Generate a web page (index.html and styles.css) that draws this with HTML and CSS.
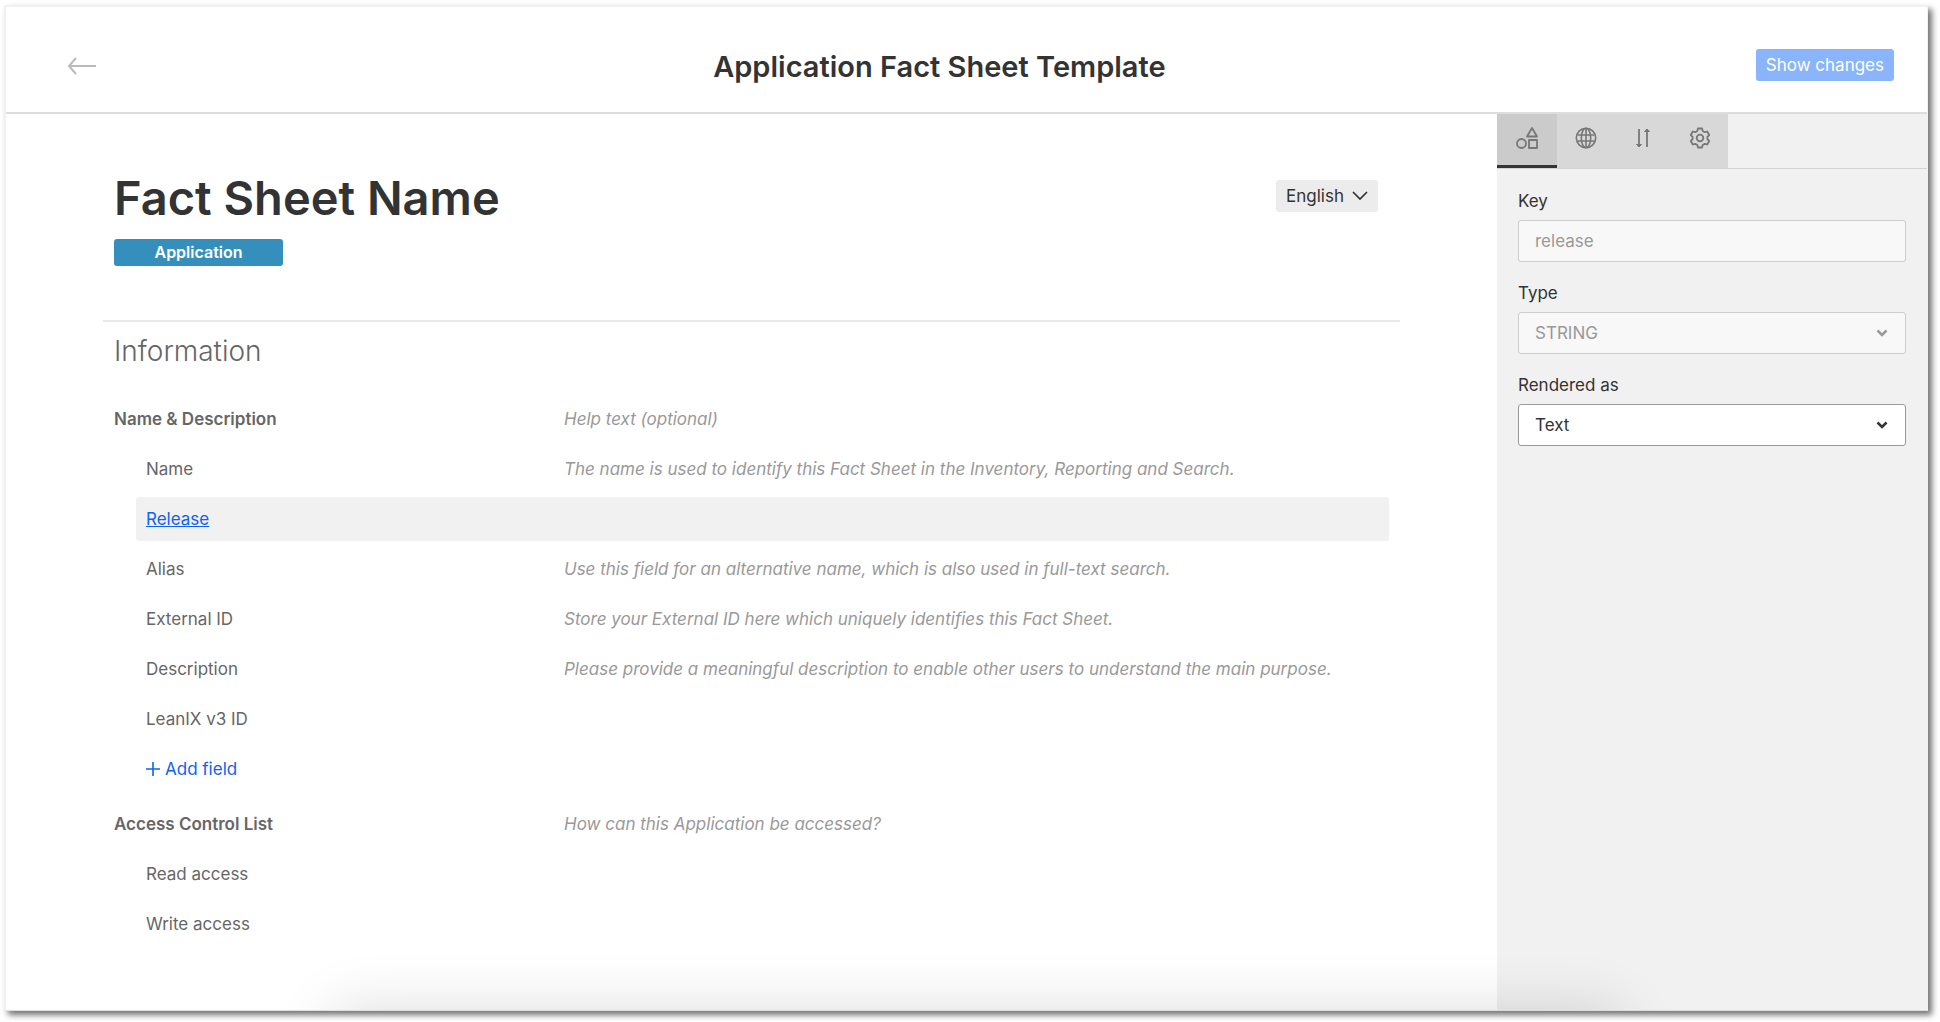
FILE: index.html
```html
<!DOCTYPE html>
<html lang="en">

<head>
    <meta charset="UTF-8">
    <meta name="viewport" content="width=device-width, initial-scale=1.0">
    <title>Application Fact Sheet Template</title>
    <link rel="stylesheet" href="styles.css">
</head>

<body>
    <div class="frame">

        <header class="header">
            <button class="back" type="button" aria-label="Back">
                <svg width="30" height="18" viewBox="0 0 30 18" fill="none" stroke="currentColor" stroke-width="2">
                    <path d="M29 9H2M9 1L2 9l7 8" />
                </svg>
            </button>
            <h1 class="title">Application Fact Sheet Template</h1>
            <button class="showChanges" type="button">Show changes</button>
        </header>

        <div class="body">
            <main class="content">
                <div class="intro">
                    <div>
                        <h2 class="name">Fact Sheet Name</h2>
                        <span class="badge">Application</span>
                    </div>
                    <div class="selectBox language">
                        <select aria-label="Language">
                            <option>English</option>
                        </select>
                        <svg class="chevron" width="16" height="10" viewBox="0 0 16 10" fill="none" stroke="currentColor" stroke-width="1.700">
                            <path d="M1 1l7 7 7-7" />
                        </svg>
                    </div>
                </div>

                <section class="section">
                    <h3 class="sectionTitle">Information</h3>

                    <div class="row group">
                        <h4>Name &amp; Description</h4>
                        <p class="help">Help text (optional)</p>
                    </div>
                    <div class="row field">
                        <span>Name</span>
                        <p class="help">The name is used to identify this Fact Sheet in the Inventory, Reporting and Search.</p>
                    </div>
                    <div class="row field active">
                        <a href="#">Release</a>
                    </div>
                    <div class="row field">
                        <span>Alias</span>
                        <p class="help">Use this field for an alternative name, which is also used in full-text search.</p>
                    </div>
                    <div class="row field">
                        <span>External ID</span>
                        <p class="help">Store your External ID here which uniquely identifies this Fact Sheet.</p>
                    </div>
                    <div class="row field">
                        <span>Description</span>
                        <p class="help">Please provide a meaningful description to enable other users to understand the main purpose.</p>
                    </div>
                    <div class="row field">
                        <span>LeanIX v3 ID</span>
                    </div>
                    <div class="row field">
                        <button class="addField" type="button">
                            <svg width="14" height="14" viewBox="0 0 14 14" fill="none" stroke="currentColor" stroke-width="1.600">
                                <path d="M7 0v14M0 7h14" />
                            </svg>
                            Add field
                        </button>
                    </div>

                    <div class="row group">
                        <h4>Access Control List</h4>
                        <p class="help">How can this Application be accessed?</p>
                    </div>
                    <div class="row field">
                        <span>Read access</span>
                    </div>
                    <div class="row field">
                        <span>Write access</span>
                    </div>
                </section>
            </main>

            <aside class="sidebar">
                <div class="tabs">
                    <button class="tab tabActive" type="button" aria-label="Field">
                        <svg width="24" height="24" viewBox="0 0 24 24" fill="none" stroke="currentColor" stroke-width="1.800" stroke-linejoin="round">
                            <path d="M17 2l5 8.500H12z" />
                            <circle cx="6.500" cy="17.500" r="4.500" />
                            <rect x="14" y="14" width="8" height="8" />
                        </svg>
                    </button>
                    <button class="tab" type="button" aria-label="Translations">
                        <svg width="24" height="24" viewBox="0 0 24 24" fill="none" stroke="currentColor" stroke-width="1.600">
                            <circle cx="12" cy="12" r="9.700" />
                            <ellipse cx="12" cy="12" rx="4.700" ry="9.700" />
                            <path d="M12 2.500v19M3.500 9h17M3.500 15h17" />
                        </svg>
                    </button>
                    <button class="tab" type="button" aria-label="Order">
                        <svg width="24" height="24" viewBox="0 0 24 24" fill="none" stroke="currentColor" stroke-width="1.800">
                            <path d="M8 3v17M16 21V4" />
                            <path d="M5.500 18.500h5L8 21zM13.500 5.500h5L16 3z" fill="currentColor" stroke-width="1" stroke-linejoin="round" />
                        </svg>
                    </button>
                    <button class="tab" type="button" aria-label="Settings">
                        <svg width="24" height="24" viewBox="0 0 24 24" fill="none" stroke="currentColor" stroke-width="1.800" stroke-linejoin="round">
                            <path d="M10 2.500h4l.7 2.500 2 1.200 2.500-.7 2 3.500-1.800 1.800v2.400l1.800 1.800-2 3.500-2.500-.7-2 1.200-.7 2.500h-4l-.7-2.500-2-1.200-2.500.7-2-3.500 1.800-1.800v-2.400L2.800 9l2-3.500 2.500.7 2-1.200z" />
                            <circle cx="12" cy="12" r="3.300" />
                        </svg>
                    </button>
                </div>

                <form class="form">
                    <label for="key">Key</label>
                    <input class="control" id="key" type="text" value="release" disabled>

                    <label for="type">Type</label>
                    <div class="selectBox">
                        <select class="control" id="type" disabled>
                            <option>STRING</option>
                        </select>
                        <svg class="chevron chevronOff" width="12" height="8" viewBox="0 0 12 8" fill="none" stroke="currentColor" stroke-width="2.500">
                            <path d="M1.500 1.500L6 6l4.500-4.500" />
                        </svg>
                    </div>

                    <label for="rendered">Rendered as</label>
                    <div class="selectBox">
                        <select class="control" id="rendered">
                            <option>Text</option>
                        </select>
                        <svg class="chevron" width="12" height="8" viewBox="0 0 12 8" fill="none" stroke="currentColor" stroke-width="2.500">
                            <path d="M1.500 1.500L6 6l4.500-4.500" />
                        </svg>
                    </div>
                </form>
            </aside>
        </div>

    </div>
</body>

</html>
```

FILE: styles.css
```css
* {
    margin: 0;
    padding: 0;
    box-sizing: border-box;
}

body {
    display: flex;
    min-height: 100vh;
    padding: 5px 12px 11px 4px;
    background-color: #fff;
    color: #333;
    font-family: Inter, "Open Sans", sans-serif;
    font-size: 17px;
    line-height: 24px;
}

button,
input,
select {
    border: 0;
    background: none;
    color: inherit;
    font: inherit;
}

.frame {
    position: relative;
    display: flex;
    flex-direction: column;
    flex: 1;
    overflow: hidden;
    border: 2px solid #f1f1f1;
    border-right-width: 1px;
    border-bottom: 1px solid #ddd;
    box-shadow: 4px 4px 6px rgba(0, 0, 0, 0.55);
}

/* shadow of the panel hidden below the bottom edge */
.frame::after {
    content: "";
    position: absolute;
    top: 100%;
    left: 17%;
    right: 16%;
    height: 60px;
    box-shadow: 0 0 60px rgba(0, 0, 0, 0.14);
    pointer-events: none;
}

.header {
    display: flex;
    align-items: flex-start;
    padding: 42px 33px 27px 61px;
    border-bottom: 2px solid #ddd;
}

.back {
    display: flex;
    align-items: center;
    width: 56px;
    height: 34px;
    color: #bbb;
}

.title {
    flex: 1;
    font-size: 29px;
    font-weight: 600;
    line-height: 36px;
    text-align: center;
}

.showChanges {
    height: 32px;
    padding: 0 10px;
    border-radius: 3px;
    background-color: #8ab4fb;
    color: #fff;
}

.body {
    display: flex;
    flex: 1;
}

.content {
    flex: 1;
    padding: 54px 97px 0;
}

.intro {
    display: flex;
    justify-content: space-between;
    align-items: flex-start;
    padding: 0 22px 54px 11px;
    border-bottom: 2px solid #e9e9e9;
}

.name {
    margin-bottom: 11px;
    font-size: 47px;
    font-weight: 600;
    line-height: 60px;
}

.badge {
    display: block;
    width: 169px;
    border-radius: 3px;
    background-color: #358fbd;
    color: #fff;
    font-size: 16px;
    font-weight: 600;
    line-height: 27px;
    text-align: center;
}

.selectBox {
    position: relative;
    display: flex;
}

.selectBox select {
    width: 100%;
    appearance: none;
}

.chevron {
    position: absolute;
    top: 50%;
    right: 18px;
    transform: translateY(-50%);
    pointer-events: none;
}

.chevronOff {
    color: #999;
}

.language {
    width: 102px;
    margin-top: 12px;
    border-radius: 3px;
    background-color: #ececec;
}

.language select {
    height: 32px;
    padding-left: 10px;
}

.language .chevron {
    right: 10px;
}

.section {
    padding: 11px 11px 0;
    color: #666;
}

.sectionTitle {
    margin-bottom: 28px;
    font-size: 28px;
    font-weight: 300;
    line-height: 36px;
}

.row {
    display: grid;
    grid-template-columns: 408px 1fr;
    column-gap: 10px;
    align-items: center;
    height: 44px;
    margin-bottom: 6px;
}

.group {
    grid-template-columns: 440px 1fr;
}

.field + .group {
    margin-top: 11px;
}

.group h4 {
    font-size: 17px;
    font-weight: 600;
}

.field {
    margin-left: 22px;
    padding-left: 10px;
    border-radius: 3px;
}

.active {
    background-color: #f1f1f1;
}

.row a,
.addField {
    justify-self: start;
    color: #0f62f0;
}

.addField {
    display: flex;
    align-items: center;
    gap: 5px;
}

.help {
    color: #999;
    font-style: italic;
}

.sidebar {
    width: 430px;
    background-color: #f1f1f1;
}

.tabs {
    display: flex;
    border-bottom: 1px solid #d4d4d4;
}

.tab {
    display: flex;
    justify-content: center;
    width: 57px;
    height: 54px;
    padding-top: 12px;
    border-bottom: 3px solid transparent;
    background-color: #d8d8d8;
    color: #777;
}

.tabActive {
    width: 60px;
    border-bottom-color: #333;
    background-color: #cbcbcb;
}

.form {
    padding: 20px 21px;
}

.form label {
    display: block;
    margin-bottom: 7px;
}

.control {
    display: block;
    width: 100%;
    height: 42px;
    margin-bottom: 19px;
    padding: 0 16px;
    border: 1px solid #999;
    border-radius: 3px;
    background-color: #fff;
}

.selectBox .control {
    margin-bottom: 0;
}

.form .selectBox {
    margin-bottom: 19px;
}

.control:disabled {
    border-color: #ccc;
    background-color: #f8f8f8;
    color: #999;
    opacity: 1;
}
```
